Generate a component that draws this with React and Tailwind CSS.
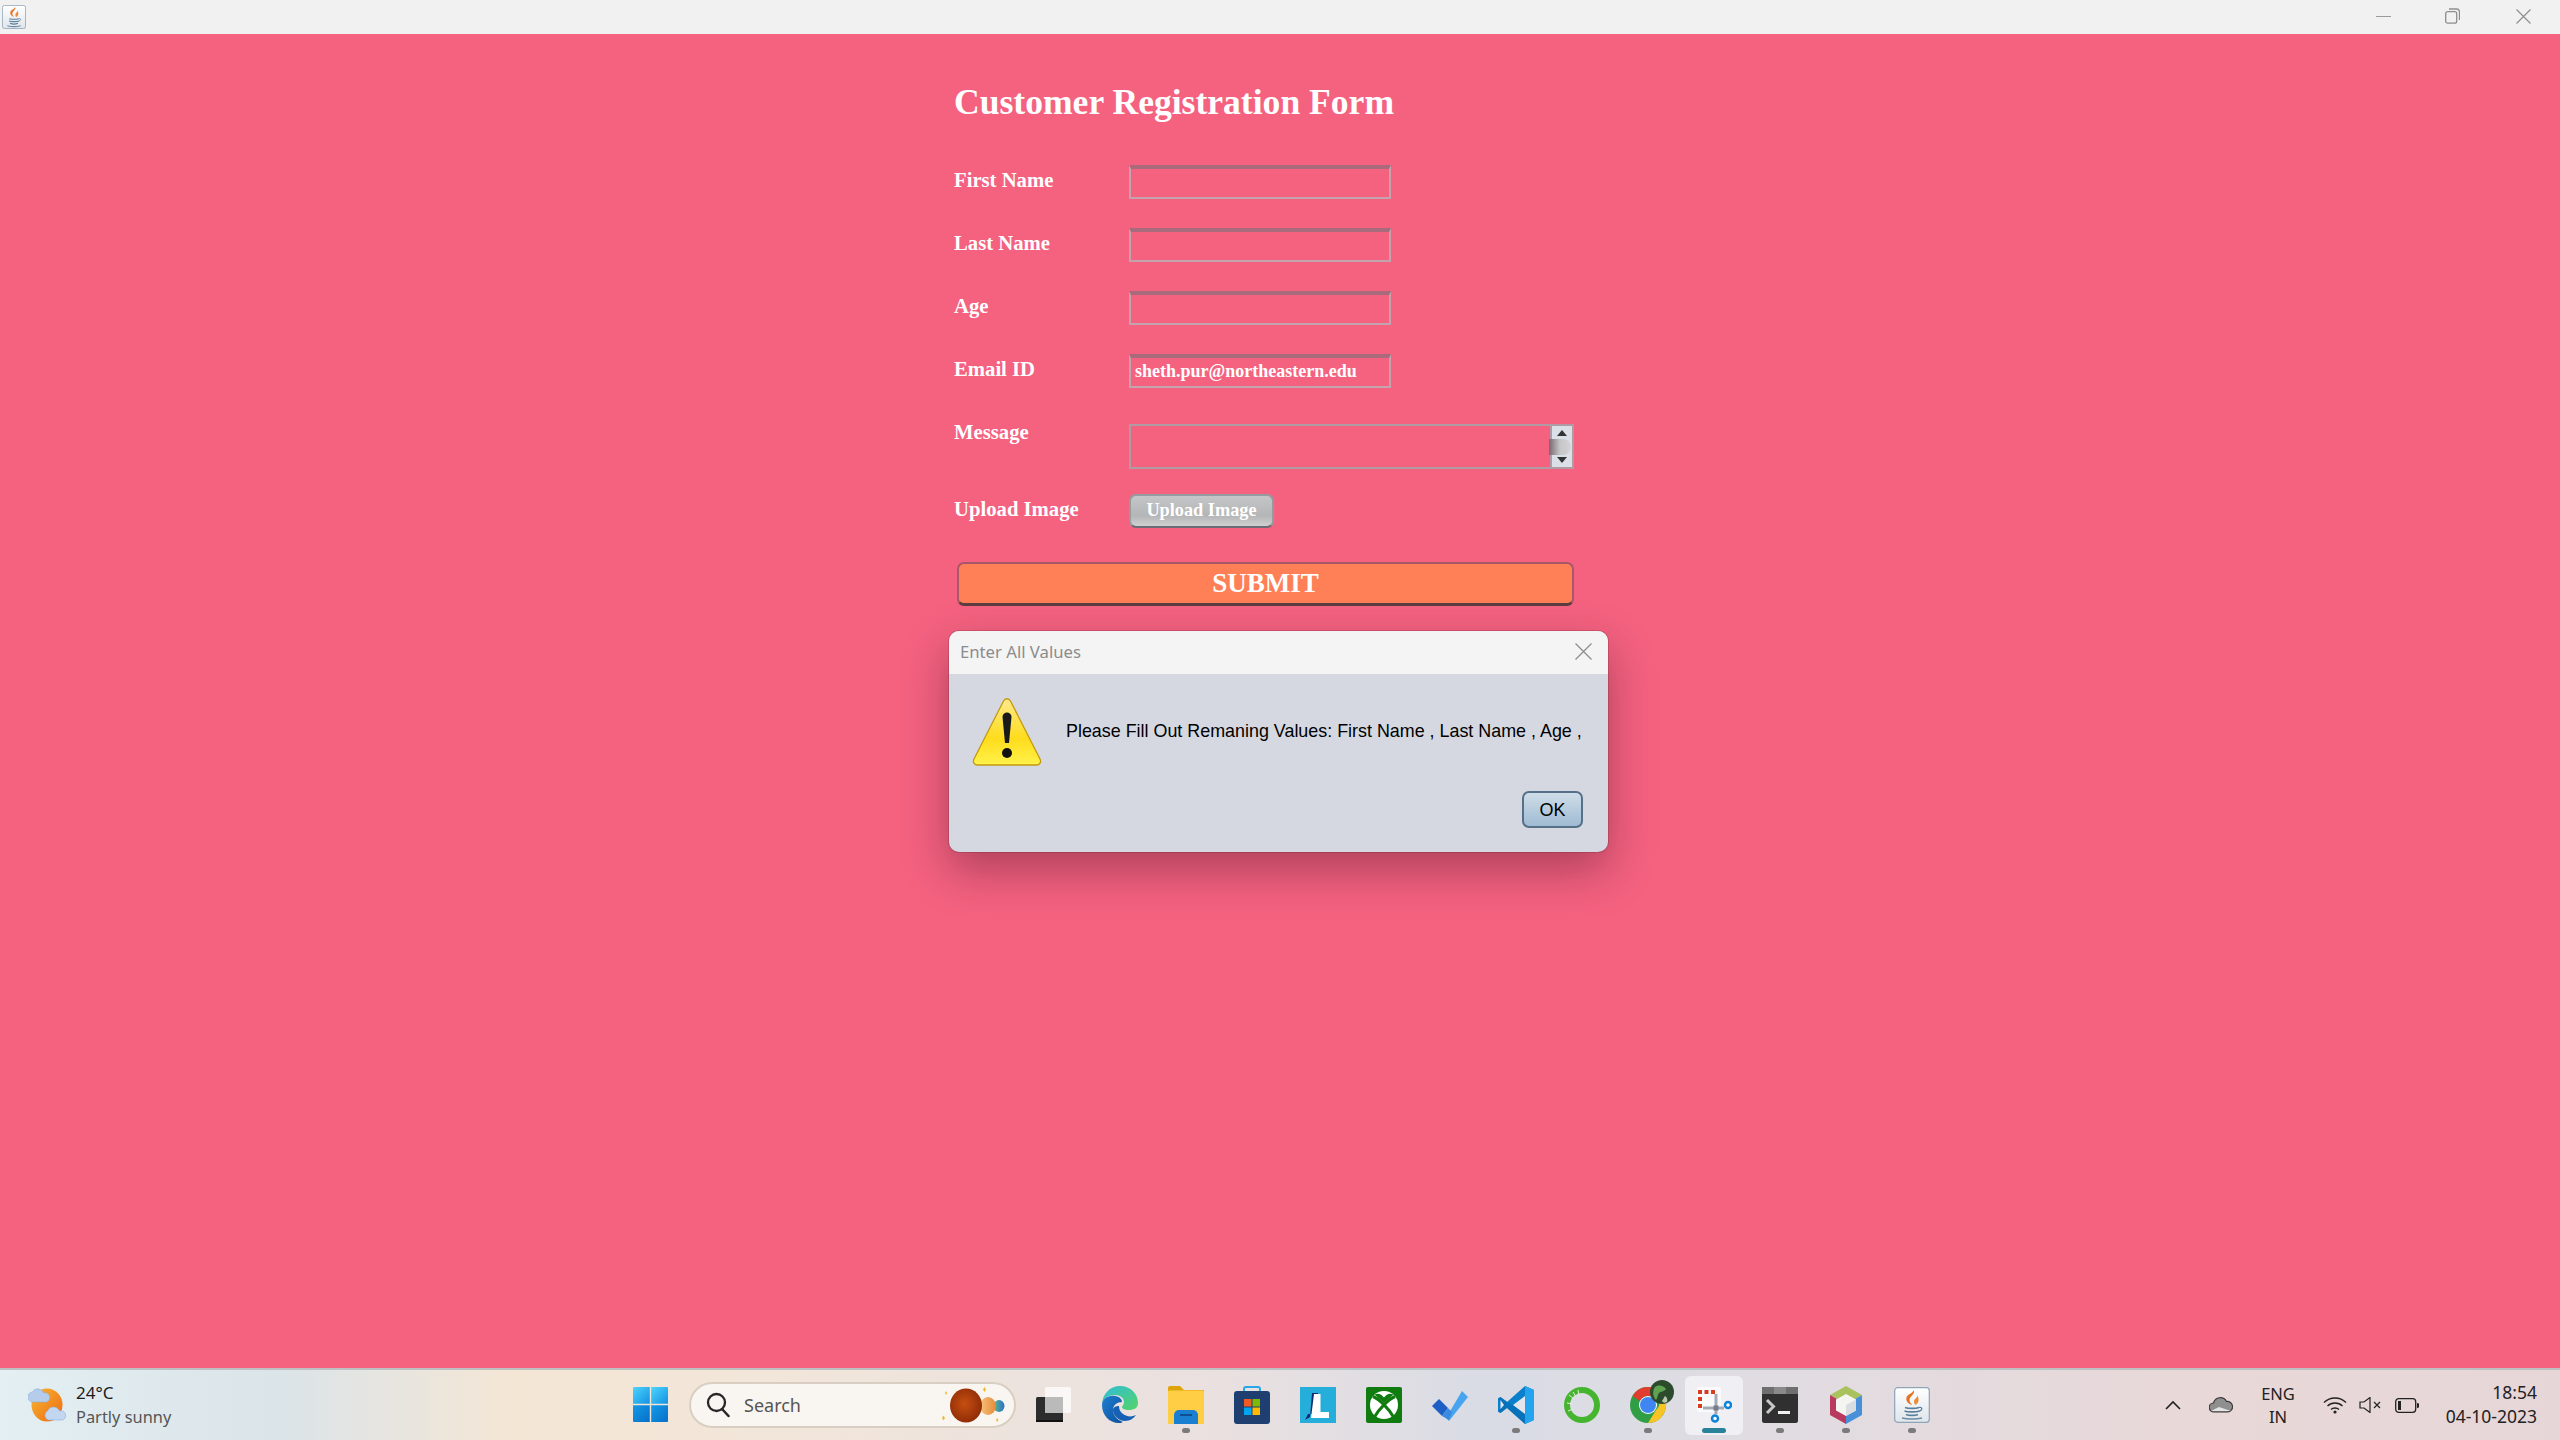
import React from "react";

const serif = { fontFamily: '"Liberation Serif", serif' };

function JavaIcon({ size = 24 }) {
  return (
    <svg width={size} height={size} viewBox="0 0 36 36">
      <defs>
        <linearGradient id="jbg" x1="0" y1="0" x2="0" y2="1">
          <stop offset="0" stopColor="#ffffff" />
          <stop offset="1" stopColor="#dfe5ea" />
        </linearGradient>
      </defs>
      <rect x="0.7" y="0.7" width="34.6" height="34.6" rx="3" fill="url(#jbg)" stroke="#8ea4b8" strokeWidth="1.2" />
      <path d="M19.500 3c2.500 4-4 6-4 10 0 2 1.500 3.500 2.500 5-4-1.500-6.500-4-5.500-7.500C13.500 7 19 6.500 19.500 3z" fill="#e8711f" />
      <path d="M23.500 8c.5 2.500-3.500 4-3.500 6.500 0 1.500 1 2.500 1 3.500 2.500-1 3.500-3 3.500-5 0-2-.5-3.500-1-5z" fill="#ee8b35" />
      <path d="M11 20.500c3 1.200 11 1.200 14 0M10.500 24c3 1.200 12 1.200 15 0M12 27.500c3 1.200 9 1.200 12 0" stroke="#5a7f9c" strokeWidth="1.700" fill="none" />
      <path d="M25 20.500c3.500-1 4 2.500 0 4" stroke="#5a7f9c" strokeWidth="1.200" fill="none" />
      <path d="M8 31c5 1.400 15 1.400 20 0" stroke="#6d8ca6" strokeWidth="1.600" fill="none" />
    </svg>
  );
}

function WindowsLogo() {
  return (
    <svg width="35" height="35" viewBox="0 0 35 35">
      <defs>
        <linearGradient id="win1" x1="0" y1="0" x2="1" y2="1">
          <stop offset="0" stopColor="#4fd3fb" />
          <stop offset="1" stopColor="#1193e4" />
        </linearGradient>
        <linearGradient id="win2" x1="0" y1="0" x2="1" y2="1">
          <stop offset="0" stopColor="#1499e8" />
          <stop offset="1" stopColor="#0670c8" />
        </linearGradient>
      </defs>
      <path d="M1 0h15.8v16.8H0V1a1 1 0 0 1 1-1z" fill="url(#win1)" />
      <path d="M18.2 0H34a1 1 0 0 1 1 1v15.8H18.2z" fill="url(#win1)" />
      <path d="M0 18.2h16.8V35H1a1 1 0 0 1-1-1z" fill="url(#win2)" />
      <path d="M18.2 18.2H35V34a1 1 0 0 1-1 1H18.2z" fill="url(#win2)" />
    </svg>
  );
}

function Weather() {
  return (
    <svg width="38" height="34" viewBox="0 0 38 34">
      <defs>
        <linearGradient id="sun" x1="0" y1="0" x2="1" y2="1">
          <stop offset="0" stopColor="#f7b733" />
          <stop offset="1" stopColor="#ee6a10" />
        </linearGradient>
      </defs>
      <ellipse cx="19" cy="17" rx="15.5" ry="16.5" fill="url(#sun)" />
      <path d="M5 14a5 5 0 0 1-.5-10 6 6 0 0 1 11 1 4.5 4.5 0 0 1 3 9z" fill="#b5cdea" stroke="#8fb0db" strokeWidth=".6" />
      <path d="M20 32a5 5 0 0 1-.5-9 6.5 6.5 0 0 1 12 0 4.6 4.6 0 0 1 3 9z" fill="#c2d6ef" stroke="#8fb0db" strokeWidth=".6" />
    </svg>
  );
}

function Planets() {
  return (
    <svg width="66" height="40" viewBox="0 0 66 40">
      <defs>
        <radialGradient id="p1" cx=".45" cy=".45" r=".6">
          <stop offset="0" stopColor="#c64f12" />
          <stop offset="1" stopColor="#8c2a05" />
        </radialGradient>
        <linearGradient id="p2" x1="0" y1="0" x2="1" y2="0">
          <stop offset="0" stopColor="#f6c27c" />
          <stop offset="1" stopColor="#e68a3a" />
        </linearGradient>
        <linearGradient id="p3" x1="0" y1="0" x2="1" y2="0">
          <stop offset="0" stopColor="#57b98a" />
          <stop offset="1" stopColor="#2f6fc9" />
        </linearGradient>
      </defs>
      <ellipse cx="57" cy="21" rx="5.500" ry="6" fill="url(#p3)" />
      <ellipse cx="46" cy="21" rx="8" ry="9" fill="url(#p2)" />
      <ellipse cx="24" cy="20.500" rx="16" ry="17" fill="url(#p1)" />
      <path d="M3 8l1 2 1-2-1-2zM41 4.500l1.500 2.500 1.500-2.500-1.500-2.500zM0 33l1.500 2.500 1.500-2.500-1.500-2.500zM54 35l1.200 2 1.200-2-1.200-2z" fill="#eeb92e" />
    </svg>
  );
}

function TaskView() {
  return (
    <svg width="36" height="36" viewBox="0 0 36 36">
      <rect x="0" y="10" width="27" height="25" rx="1.5" fill="#2c2c2c" />
      <rect x="0" y="33" width="27" height="2" fill="#111" />
      <rect x="9" y="0" width="26" height="26" rx="1.5" fill="#ffffff" fillOpacity=".72" />
      <rect x="9" y="10" width="18" height="16" fill="#b9b9b9" fillOpacity=".9" />
    </svg>
  );
}

function Edge() {
  return (
    <svg width="38" height="38" viewBox="0 0 38 38">
      <defs>
        <linearGradient id="e1" x1="0" y1="0" x2="1" y2="1">
          <stop offset="0" stopColor="#31bdd8" />
          <stop offset="1" stopColor="#54d467" />
        </linearGradient>
        <linearGradient id="e2" x1="0" y1="0" x2="1" y2="1">
          <stop offset="0" stopColor="#1f7fd2" />
          <stop offset="1" stopColor="#0c4f9a" />
        </linearGradient>
      </defs>
      <path d="M1 19C1 8 9 0 19 0c11 0 18 8 18 17 0 5-4 7-9 7-4 0-7-1-7-3 0-1 2-2 2-5 0-4-4-7-9-7C7 9 1 13 1 19z" fill="url(#e1)" />
      <path d="M1 19c0-6 6-10 13-9 4 .5 7 3 7 6-5 0-9 3-9 8s4 10 10 12c-1 .5-2 1-4 1C8 37 1 29 1 19z" fill="url(#e2)" />
      <path d="M12 24c0 6 6 11 12 11 5 0 9-3 11-6-4 2-9 2-13-1-3-2-4-5-4-8-3 0-6 1-6 4z" fill="#1660b5" />
    </svg>
  );
}

function Explorer() {
  return (
    <svg width="36" height="38" viewBox="0 0 36 38">
      <path d="M0 2a2 2 0 0 1 2-2h10l4 4h20v8H0z" fill="#dea40a" />
      <rect x="0" y="4.500" width="36" height="33.500" rx="1" fill="#ffce45" />
      <path d="M6 38v-9a5 5 0 0 1 5-5h14a5 5 0 0 1 5 5v9z" fill="#1a7fd0" />
      <rect x="12" y="28" width="12" height="2" fill="#0d4f8f" />
    </svg>
  );
}

function Store() {
  return (
    <svg width="36" height="38" viewBox="0 0 36 38">
      <path d="M10 8V3a2 2 0 0 1 2-2h12a2 2 0 0 1 2 2v5" stroke="#2aa7e8" strokeWidth="2" fill="none" />
      <rect x="0" y="5" width="36" height="33" rx="3" fill="#1f3f70" />
      <rect x="10" y="13" width="7.500" height="7.500" fill="#f05a24" />
      <rect x="18.500" y="13" width="7.500" height="7.500" fill="#7fba00" />
      <rect x="10" y="21.500" width="7.500" height="7.500" fill="#00a4ef" />
      <rect x="18.500" y="21.500" width="7.500" height="7.500" fill="#ffb900" />
    </svg>
  );
}

function LApp() {
  return (
    <svg width="36" height="36" viewBox="0 0 36 36">
      <rect width="36" height="36" fill="#26aedb" />
      <path d="M12 6h6l-1 21H8l-3 6 5-3z" fill="#142a6e" />
      <path d="M14 7h6.500v18H29v6H11z" fill="#ffffff" />
    </svg>
  );
}

function Xbox() {
  return (
    <svg width="36" height="36" viewBox="0 0 36 36">
      <rect width="36" height="36" rx="2" fill="#107c10" />
      <circle cx="18" cy="18" r="14" fill="#ffffff" />
      <path d="M8.500 7.500Q14 5 18 10.500Q22 5 27.500 7.500L18 16z" fill="#107c10" />
      <path d="M7 9.500C13 12 22.500 21 27.500 30M29 9.500C23 12 13.500 21 8.500 30" stroke="#107c10" strokeWidth="3" fill="none" />
      <path d="M4 18c0-2 .5-4 1.500-5.500" stroke="#107c10" strokeWidth="0" fill="none" />
    </svg>
  );
}

function Todo() {
  return (
    <svg width="38" height="38" viewBox="0 0 38 38">
      <path d="M15 32L31 5l6 6-19 24z" fill="#47a5f0" />
      <path d="M1 20l7-7 9 9-6 8z" fill="#1d5fc4" />
      <path d="M11 30l6-8 4 4-3 8z" fill="#3a8ae0" />
    </svg>
  );
}

function VSCode() {
  return (
    <svg width="36" height="38" viewBox="0 0 36 38">
      <path d="M27 0l9 4v30l-9 4L9 22 2.500 27 0 25.500V12.500L2.500 11 9 16z" fill="#0a7fcb" />
      <path d="M27 0l9 4v30l-9 4z" fill="#24a4ee" />
      <path d="M0 12.500L2.500 11 27 28v10L9 22 2.500 27 0 25.500l6-6.500z" fill="#0667ac" fillOpacity=".55" />
      <path d="M27 10v18l-12-9z" fill="#e4e5ec" />
      <path d="M2.500 14l3.500 5-3.500 4z" fill="#e4e5ec" />
    </svg>
  );
}

function Ring() {
  return (
    <svg width="36" height="36" viewBox="0 0 36 36">
      <ellipse cx="18" cy="18" rx="15" ry="15" fill="none" stroke="#45b52f" strokeWidth="6" />
      <path d="M5 8l5 4M3 16l6 1M4 24l5-2M9 5l3 5M14 3l1 6" stroke="#e7ecd9" strokeWidth="1" />
    </svg>
  );
}

function Chrome() {
  return (
    <svg width="36" height="36" viewBox="0 0 36 36" overflow="visible">
      <circle cx="18" cy="18" r="18" fill="#2f9e44" />
      <path d="M18 0a18 18 0 0 1 15.600 9H18a9 9 0 0 0-8 5L2.500 9A18 18 0 0 1 18 0z" fill="#e23c2e" />
      <path d="M33.600 9A18 18 0 0 1 18 36l8-13a9 9 0 0 0 0-14z" fill="#f7c325" />
      <circle cx="18" cy="18" r="9" fill="#fff" />
      <circle cx="18" cy="18" r="8" fill="#3f86f2" />
      <circle cx="32" cy="5" r="12" fill="#2c4a2c" />
      <path d="M25 0c4-3 9-1 11 2-2 3-5 2-7 4s-1 5-3 7c-3-3-4-9-1-13z" fill="#5fa24f" />
      <path d="M35 9c2 1 3 4 2 6-2 1-4 1-5-1z" fill="#b9c6ae" />
    </svg>
  );
}

function Snip() {
  return (
    <svg width="36" height="36" viewBox="0 0 36 36">
      <rect x="1" y="0" width="24" height="25" rx="2" fill="#fafafc" />
      <path d="M2 3h4v4H2zM8.500 3h4v4h-4zM15 3h4v4h-4zM2 10h4v4H2zM2 17h4v4H2z" fill="#d83b1d" />
      <path d="M7 21h21M20 7v20" stroke="#a3aab4" strokeWidth="3" fill="none" />
      <rect x="17.500" y="18.500" width="5" height="5" fill="#767d88" />
      <circle cx="32" cy="18" r="3" fill="#fff" stroke="#0d84d8" strokeWidth="2.500" />
      <circle cx="19" cy="31.500" r="3" fill="#fff" stroke="#0d84d8" strokeWidth="2.500" />
    </svg>
  );
}

function Terminal() {
  return (
    <svg width="36" height="36" viewBox="0 0 36 36">
      <rect width="36" height="36" rx="2.500" fill="#303030" />
      <rect width="36" height="7" y="0" fill="#6f6f6f" />
      <rect x="12" width="12" height="7" fill="#8a8a8a" />
      <path d="M5 13l6.500 6.500L5 26" stroke="#c9c9c9" strokeWidth="3" fill="none" />
      <rect x="16" y="24" width="12" height="3" fill="#efefef" />
    </svg>
  );
}

function NetBeans() {
  return (
    <svg width="36" height="38" viewBox="0 0 36 38">
      <path d="M18 0L34 9 18 18 2 9z" fill="#a9c25d" />
      <path d="M2 9v20l16 9V18z" fill="#b83a5e" />
      <path d="M34 9v20l-16 9V18z" fill="#4a90d9" />
      <path d="M18 8l10 5.500v11L18 30 8 24.500v-11z" fill="#f4f4f0" />
      <path d="M18 19l10-5.500v11L18 30z" fill="#d9dde0" />
    </svg>
  );
}

function Dot({ w = "w-[8px]", c = "bg-[#7b7b7b]" }) {
  return <div className={`absolute bottom-[7px] left-1/2 h-[5px] -translate-x-1/2 rounded-full ${w} ${c}`} />;
}

function Cell({ dot, children }) {
  return (
    <div className="relative flex h-full w-[66px] items-center justify-center pb-[1px]">
      {children}
      {dot && <Dot />}
    </div>
  );
}

function Field({ label, value }) {
  return (
    <div className="flex h-[34px] items-start">
      <div className="w-[175px] pt-[3px] text-[20.700px] font-bold leading-[24px] text-white">{label}</div>
      <div className="box-border flex h-[34px] w-[262px] items-center border-2 border-[#c3a3ad] border-t-[4px] border-t-[#a96a7b] pb-[2px] pl-[4px] text-[18px] font-bold text-white">
        {value}
      </div>
    </div>
  );
}

export default function App() {
  return (
    <div className="flex h-screen w-full flex-col overflow-hidden bg-[#f46280]">
      <div className="flex h-[34px] shrink-0 items-center justify-between bg-[#f1f1f1] pl-[2px]">
        <JavaIcon />
        <div className="flex items-center pb-[2px]">
          <svg width="15" height="15" viewBox="0 0 15 15" className="mr-[54px]">
            <path d="M0 7.500h15" stroke="#9b9b9b" strokeWidth="1" />
          </svg>
          <svg width="15" height="16" viewBox="0 0 15 16" className="mr-[56px]">
            <rect x=".7" y="3.700" width="11" height="11.500" rx="2" fill="none" stroke="#8e8e8e" strokeWidth="1.300" />
            <path d="M4 1h7.500a3 3 0 0 1 3 3v8" fill="none" stroke="#8e8e8e" strokeWidth="1.300" />
          </svg>
          <svg width="15" height="15" viewBox="0 0 15 15" className="mr-[29px]">
            <path d="M.5.500l14 14M14.500.500l-14 14" stroke="#8e8e8e" strokeWidth="1.200" />
          </svg>
        </div>
      </div>

      <div className="relative flex-1 pl-[954px] pt-[48px]" style={serif}>
        <h1 className="h-[40px] text-[35.600px] font-bold leading-[40px] text-white">Customer Registration Form</h1>
        <div className="mt-[43px] flex flex-col gap-[29px]">
          <Field label="First Name" />
          <Field label="Last Name" />
          <Field label="Age" />
          <Field label="Email ID" value="sheth.pur@northeastern.edu" />
        </div>
        <div className="mt-[36px] flex h-[45px] items-start">
          <div className="mt-[-4px] w-[175px] text-[20.700px] font-bold leading-[24px] text-white">Message</div>
          <div className="box-border flex h-[45px] w-[445px] border-2 border-[#b09aa3]">
            <div className="flex-1" />
            <div className="relative box-border flex w-[22px] flex-col items-center justify-between border-l-2 border-[#b09aa3] bg-[#dbe0e8] py-[4px]">
              <svg width="10" height="6" viewBox="0 0 10 6"><path d="M5 0l5 6H0z" fill="#333" /></svg>
              <div className="absolute left-[-3px] top-[13px] h-[16px] w-[22px] rounded-r-full bg-[linear-gradient(90deg,#77686f,#c6c6c9_50%,#d3d3d6)]" />
              <svg width="10" height="6" viewBox="0 0 10 6"><path d="M5 6l5-6H0z" fill="#333" /></svg>
            </div>
          </div>
        </div>
        <div className="mt-[25px] flex h-[34px] items-start">
          <div className="w-[175px] pt-[3px] text-[20.700px] font-bold leading-[24px] text-white">Upload Image</div>
          <button className="box-border h-[34px] w-[145px] rounded-[7px] border-2 border-[#949ca0] border-b-[#6c6a72] bg-[linear-gradient(180deg,#c4c6c8,#b4b5b6_65%,#cfd0d0)] pb-[1px] text-[18.300px] font-bold leading-none text-white">
            Upload Image
          </button>
        </div>
        <button className="ml-[3px] mt-[34px] box-border block h-[44px] w-[617px] rounded-[7px] border-2 border-[#a8566a] border-b-[3px] border-b-[#5c3d40] bg-[#ff7f56] text-[27px] font-bold leading-none text-white">
          SUBMIT
        </button>

        <div className="absolute left-[949px] top-[597px] h-[221px] w-[659px] overflow-hidden rounded-[10px] bg-[#d5d8e0] shadow-[0_18px_45px_rgba(60,10,30,0.38)] ring-1 ring-[#00000020]">
          <div className="flex h-[43px] items-center justify-between bg-[#f4f4f4] pb-[2px] pl-[11px] pr-[16px]" style={{ fontFamily: '"Noto Sans", sans-serif' }}>
            <span className="text-[16.700px] text-[#8c8c8c]">Enter All Values</span>
            <svg width="17" height="17" viewBox="0 0 17 17"><path d="M.5.500l16 16M16.500.500l-16 16" stroke="#8c8c8c" strokeWidth="1.200" /></svg>
          </div>
          <div className="flex items-start pl-[23px] pt-[24px]" style={{ fontFamily: '"Liberation Sans", sans-serif' }}>
            <svg width="70" height="68" viewBox="0 0 70 68">
              <defs>
                <linearGradient id="warn" x1="0" y1="0" x2="0" y2="1">
                  <stop offset="0" stopColor="#ffe98c" />
                  <stop offset=".6" stopColor="#ffdc1c" />
                  <stop offset="1" stopColor="#fff24a" />
                </linearGradient>
              </defs>
              <path d="M31.500 3c1.800-3 5.200-3 7 0l29.500 58c1.500 3-.2 6-3.500 6h-59C2.200 67 .500 64 2 61z" fill="url(#warn)" stroke="#c29a0c" strokeWidth="1.300" />
              <path d="M30.500 19c0-6 9-6 9 0l-2.500 26h-4z" fill="#1a1a1a" />
              <ellipse cx="35" cy="55" rx="5" ry="5" fill="#111" />
            </svg>
            <div className="ml-[24px] mt-[22px] whitespace-nowrap text-[17.900px] leading-[22px] text-black">
              Please Fill Out Remaning Values: First Name , Last Name , Age ,
            </div>
          </div>
          <button className="absolute left-[573px] top-[160px] box-border h-[37px] w-[61px] rounded-[7px] border-2 border-[#567087] bg-[linear-gradient(180deg,#cfdde8,#9fbbd3)] text-[18px] leading-none text-black" style={{ fontFamily: '"Liberation Sans", sans-serif' }}>
            OK
          </button>
        </div>
      </div>

      <div className="flex h-[72px] shrink-0 items-center border-t-2 border-[#bdbfc0] bg-[linear-gradient(90deg,#e3eff3_0%,#dbe4e8_11%,#f4e6d5_20%,#f2e6da_30%,#e9e0e0_48%,#d9dce5_58%,#e1dce2_70%,#e8d8d8_85%,#e7d6d7_100%)]" style={{ fontFamily: '"Noto Sans", sans-serif' }}>
        <div className="flex w-[617px] items-center pl-[28px]">
          <Weather />
          <div className="ml-[10px] flex flex-col">
            <span className="text-[17px] leading-[24px] text-[#1c1c1c]">24°C</span>
            <span className="text-[16.400px] leading-[24px] text-[#555]">Partly sunny</span>
          </div>
        </div>
        <div className="flex h-full items-center">
          <Cell><WindowsLogo /></Cell>
          <div className="ml-[6px] mr-[5px] flex h-[46px] w-[327px] items-center rounded-full border-2 border-[#d8cfc2] bg-[#f9f5f0] pl-[15px]">
            <svg width="24" height="26" viewBox="0 0 24 26" fill="none">
              <circle cx="10.500" cy="10.500" r="8.500" stroke="#262626" strokeWidth="2.300" />
              <path d="M16.500 17.500L22.500 24" stroke="#262626" strokeWidth="2.500" strokeLinecap="round" />
            </svg>
            <span className="ml-[14px] text-[18px] text-[#555]">Search</span>
            <div className="ml-[141px]"><Planets /></div>
          </div>
          <Cell><TaskView /></Cell>
          <Cell><Edge /></Cell>
          <Cell dot><Explorer /></Cell>
          <Cell><Store /></Cell>
          <Cell><LApp /></Cell>
          <Cell><Xbox /></Cell>
          <Cell><Todo /></Cell>
          <Cell dot><VSCode /></Cell>
          <Cell><Ring /></Cell>
          <Cell dot><Chrome /></Cell>
          <div className="relative flex h-full w-[66px] items-center justify-center pb-[1px]">
            <div className="absolute bottom-[5px] left-[4px] right-[4px] top-[6px] rounded-[6px] bg-[#f0f0f4]" />
            <div className="relative flex"><Snip /></div>
            <Dot w="w-[24px]" c="bg-[#2a8299]" />
          </div>
          <Cell dot><Terminal /></Cell>
          <Cell dot><NetBeans /></Cell>
          <Cell dot><JavaIcon size={36} /></Cell>
        </div>
        <div className="ml-[220px] flex items-center text-[#222]">
          <svg width="16" height="10" viewBox="0 0 16 10" fill="none"><path d="M1 9l7-7 7 7" stroke="#222" strokeWidth="1.600" /></svg>
          <svg className="ml-[28px]" width="24" height="16" viewBox="0 0 24 16">
            <path d="M5 15a4.500 4.500 0 0 1-.5-9 7 7 0 0 1 13-1.500A5.200 5.200 0 0 1 19 15z" fill="#8f8f8f" stroke="#3a3a3a" strokeWidth="1.200" />
            <path d="M2 14l8-4 12 4z" fill="#e4e4e4" />
          </svg>
          <div className="ml-[25px] flex w-[40px] flex-col items-center text-[16.500px] leading-[23px]">
            <span>ENG</span>
            <span>IN</span>
          </div>
          <svg className="ml-[25px]" width="24" height="18" viewBox="0 0 24 18" fill="none" stroke="#222" strokeWidth="1.300">
            <path d="M1 6.500c6-6 16-6 22 0M4.500 10c4-4 11-4 15 0M8 13.500c2-2 6-2 8 0" />
            <circle cx="12" cy="16" r="1.600" fill="#222" stroke="none" />
          </svg>
          <svg className="ml-[12px]" width="23" height="16" viewBox="0 0 23 16" fill="none" stroke="#222" strokeWidth="1.200">
            <path d="M1 5h4l6-4.500v15L5 11H1z" />
            <path d="M15 5l6 6M21 5l-6 6" />
          </svg>
          <svg className="ml-[13px]" width="24" height="15" viewBox="0 0 24 15" fill="none">
            <rect x=".7" y=".7" width="20" height="13.600" rx="3" stroke="#222" strokeWidth="1.300" />
            <rect x="3" y="3" width="3" height="9" fill="#222" />
            <path d="M22 5a2.500 2.500 0 0 1 0 5z" fill="#222" />
          </svg>
          <div className="ml-[24px] flex w-[94px] flex-col items-end pb-[2px] text-[17.500px] leading-[24px]">
            <span>18:54</span>
            <span className="whitespace-nowrap">04-10-2023</span>
          </div>
        </div>
      </div>
    </div>
  );
}
